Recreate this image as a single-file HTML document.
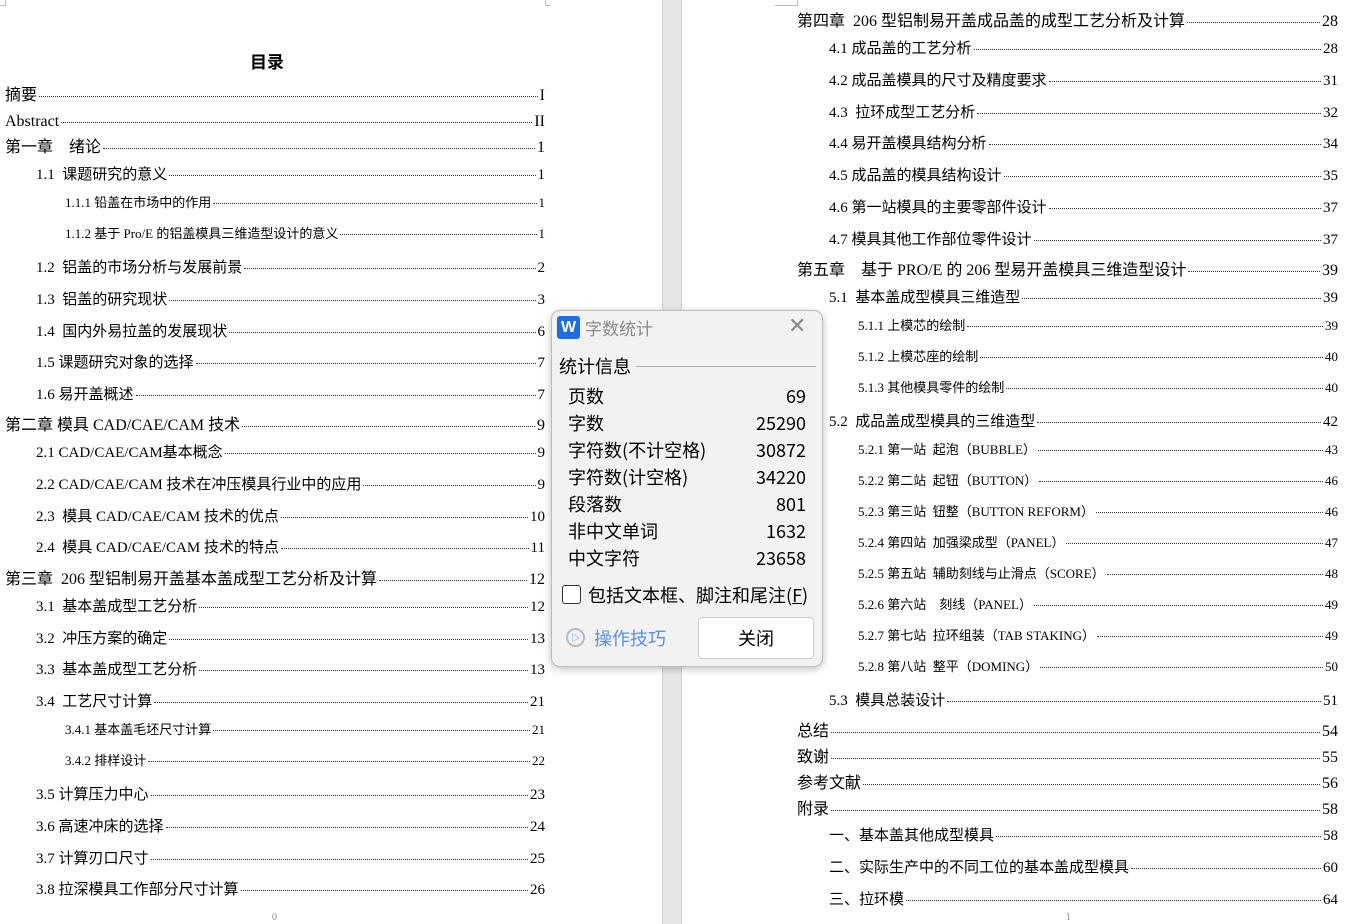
<!DOCTYPE html>
<html><head><meta charset="utf-8"><style>
*{margin:0;padding:0;box-sizing:border-box}
body{width:1345px;height:924px;position:relative;overflow:hidden;background:#fff;font-family:"Liberation Serif","Noto Sans CJK SC",serif;color:#000}
.gap{position:absolute;left:662px;top:0;width:20px;height:924px;background:#e6e6e6;border-left:1px solid #d0d0d0;border-right:1px solid #d0d0d0}
.l{position:absolute;display:flex;align-items:baseline;white-space:nowrap;height:20px;line-height:20px;font-size:15px;margin-top:2px}
.l .d{flex:1;border-bottom:1px dotted #333;margin:0 2px;transform:translateY(-3px)}
.s3{font-size:13px}
.t1{font-size:16px}
.dlg{position:absolute;left:551px;top:310px;width:272px;height:357px;background:#f2f2f2;border:1px solid #bdbdbd;border-radius:9px;box-shadow:0 2px 8px rgba(0,0,0,.25);font-family:"Noto Sans CJK SC",sans-serif}
.dlg .r{position:absolute;left:16px;right:16px;font-size:18px;display:flex;justify-content:space-between;line-height:24px}
</style></head><body>
<div class="gap"></div>
<div style="position:absolute;left:0;top:0;width:6px;height:6px;border-right:1px solid #bbb;border-bottom:1px solid #bbb"></div>
<div style="position:absolute;left:545px;top:0;width:6px;height:6px;border-left:1px solid #bbb;border-bottom:1px solid #bbb"></div>
<div style="position:absolute;left:775px;top:0;width:23px;height:6px;border-right:1px solid #bbb;border-bottom:1px solid #bbb"></div>
<div style="position:absolute;left:250px;top:48px;font-size:17px;font-weight:bold;font-family:'Noto Sans CJK SC',sans-serif">目录</div>
<div style="position:absolute;left:272px;top:912px;font-size:10px;color:#888">0</div>
<div style="position:absolute;left:1066px;top:912px;font-size:10px;color:#888">1</div>

<div class="l t1" style="left:5px;top:84px;width:540px">摘要<span class="d"></span>I</div>
<div class="l t1" style="left:5px;top:110px;width:540px">Abstract<span class="d"></span>II</div>
<div class="l t1" style="left:5px;top:136px;width:540px">第一章　绪论<span class="d"></span>1</div>
<div class="l" style="left:36px;top:163px;width:509px">1.1&nbsp; 课题研究的意义<span class="d"></span>1</div>
<div class="l s3" style="left:65px;top:191px;width:480px">1.1.1 铅盖在市场中的作用<span class="d"></span>1</div>
<div class="l s3" style="left:65px;top:222px;width:480px">1.1.2 基于 Pro/E 的铝盖模具三维造型设计的意义<span class="d"></span>1</div>
<div class="l" style="left:36px;top:256px;width:509px">1.2&nbsp; 铝盖的市场分析与发展前景<span class="d"></span>2</div>
<div class="l" style="left:36px;top:288px;width:509px">1.3&nbsp; 铝盖的研究现状<span class="d"></span>3</div>
<div class="l" style="left:36px;top:320px;width:509px">1.4&nbsp; 国内外易拉盖的发展现状<span class="d"></span>6</div>
<div class="l" style="left:36px;top:351px;width:509px">1.5 课题研究对象的选择<span class="d"></span>7</div>
<div class="l" style="left:36px;top:383px;width:509px">1.6 易开盖概述<span class="d"></span>7</div>
<div class="l t1" style="left:5px;top:414px;width:540px">第二章 模具 CAD/CAE/CAM 技术<span class="d"></span>9</div>
<div class="l" style="left:36px;top:441px;width:509px">2.1 CAD/CAE/CAM基本概念<span class="d"></span>9</div>
<div class="l" style="left:36px;top:473px;width:509px">2.2 CAD/CAE/CAM 技术在冲压模具行业中的应用<span class="d"></span>9</div>
<div class="l" style="left:36px;top:505px;width:509px">2.3&nbsp; 模具 CAD/CAE/CAM 技术的优点<span class="d"></span>10</div>
<div class="l" style="left:36px;top:536px;width:509px">2.4&nbsp; 模具 CAD/CAE/CAM 技术的特点<span class="d"></span>11</div>
<div class="l t1" style="left:5px;top:568px;width:540px">第三章&nbsp; 206 型铝制易开盖基本盖成型工艺分析及计算<span class="d"></span>12</div>
<div class="l" style="left:36px;top:595px;width:509px">3.1&nbsp; 基本盖成型工艺分析<span class="d"></span>12</div>
<div class="l" style="left:36px;top:627px;width:509px">3.2&nbsp; 冲压方案的确定<span class="d"></span>13</div>
<div class="l" style="left:36px;top:658px;width:509px">3.3&nbsp; 基本盖成型工艺分析<span class="d"></span>13</div>
<div class="l" style="left:36px;top:690px;width:509px">3.4&nbsp; 工艺尺寸计算<span class="d"></span>21</div>
<div class="l s3" style="left:65px;top:718px;width:480px">3.4.1 基本盖毛坯尺寸计算<span class="d"></span>21</div>
<div class="l s3" style="left:65px;top:749px;width:480px">3.4.2 排样设计<span class="d"></span>22</div>
<div class="l" style="left:36px;top:783px;width:509px">3.5 计算压力中心<span class="d"></span>23</div>
<div class="l" style="left:36px;top:815px;width:509px">3.6 高速冲床的选择<span class="d"></span>24</div>
<div class="l" style="left:36px;top:847px;width:509px">3.7 计算刃口尺寸<span class="d"></span>25</div>
<div class="l" style="left:36px;top:878px;width:509px">3.8 拉深模具工作部分尺寸计算<span class="d"></span>26</div>

<div class="l t1" style="left:797px;top:10px;width:541px">第四章&nbsp; 206 型铝制易开盖成品盖的成型工艺分析及计算<span class="d"></span>28</div>
<div class="l" style="left:829px;top:37px;width:509px">4.1 成品盖的工艺分析<span class="d"></span>28</div>
<div class="l" style="left:829px;top:69px;width:509px">4.2 成品盖模具的尺寸及精度要求<span class="d"></span>31</div>
<div class="l" style="left:829px;top:101px;width:509px">4.3&nbsp; 拉环成型工艺分析<span class="d"></span>32</div>
<div class="l" style="left:829px;top:132px;width:509px">4.4 易开盖模具结构分析<span class="d"></span>34</div>
<div class="l" style="left:829px;top:164px;width:509px">4.5 成品盖的模具结构设计<span class="d"></span>35</div>
<div class="l" style="left:829px;top:196px;width:509px">4.6 第一站模具的主要零部件设计<span class="d"></span>37</div>
<div class="l" style="left:829px;top:228px;width:509px">4.7 模具其他工作部位零件设计<span class="d"></span>37</div>
<div class="l t1" style="left:797px;top:259px;width:541px">第五章&nbsp;&nbsp;&nbsp; 基于 PRO/E 的 206 型易开盖模具三维造型设计<span class="d"></span>39</div>
<div class="l" style="left:829px;top:286px;width:509px">5.1&nbsp; 基本盖成型模具三维造型<span class="d"></span>39</div>
<div class="l s3" style="left:858px;top:314px;width:480px">5.1.1 上模芯的绘制<span class="d"></span>39</div>
<div class="l s3" style="left:858px;top:345px;width:480px">5.1.2 上模芯座的绘制<span class="d"></span>40</div>
<div class="l s3" style="left:858px;top:376px;width:480px">5.1.3 其他模具零件的绘制<span class="d"></span>40</div>
<div class="l" style="left:829px;top:410px;width:509px">5.2&nbsp; 成品盖成型模具的三维造型<span class="d"></span>42</div>
<div class="l s3" style="left:858px;top:438px;width:480px">5.2.1 第一站&nbsp; 起泡（BUBBLE）<span class="d"></span>43</div>
<div class="l s3" style="left:858px;top:469px;width:480px">5.2.2 第二站&nbsp; 起钮（BUTTON）<span class="d"></span>46</div>
<div class="l s3" style="left:858px;top:500px;width:480px">5.2.3 第三站&nbsp; 钮整（BUTTON REFORM）<span class="d"></span>46</div>
<div class="l s3" style="left:858px;top:531px;width:480px">5.2.4 第四站&nbsp; 加强梁成型（PANEL）<span class="d"></span>47</div>
<div class="l s3" style="left:858px;top:562px;width:480px">5.2.5 第五站&nbsp; 辅助刻线与止滑点（SCORE）<span class="d"></span>48</div>
<div class="l s3" style="left:858px;top:593px;width:480px">5.2.6 第六站&nbsp;&nbsp;&nbsp; 刻线（PANEL）<span class="d"></span>49</div>
<div class="l s3" style="left:858px;top:624px;width:480px">5.2.7 第七站&nbsp; 拉环组装（TAB STAKING）<span class="d"></span>49</div>
<div class="l s3" style="left:858px;top:655px;width:480px">5.2.8 第八站&nbsp; 整平（DOMING）<span class="d"></span>50</div>
<div class="l" style="left:829px;top:689px;width:509px">5.3&nbsp; 模具总装设计<span class="d"></span>51</div>
<div class="l t1" style="left:797px;top:720px;width:541px">总结<span class="d"></span>54</div>
<div class="l t1" style="left:797px;top:746px;width:541px">致谢<span class="d"></span>55</div>
<div class="l t1" style="left:797px;top:772px;width:541px">参考文献<span class="d"></span>56</div>
<div class="l t1" style="left:797px;top:798px;width:541px">附录<span class="d"></span>58</div>
<div class="l" style="left:829px;top:824px;width:509px">一、基本盖其他成型模具<span class="d"></span>58</div>
<div class="l" style="left:829px;top:856px;width:509px">二、实际生产中的不同工位的基本盖成型模具<span class="d"></span>60</div>
<div class="l" style="left:829px;top:888px;width:509px">三、拉环模<span class="d"></span>64</div>

<div class="dlg">
 <div style="position:absolute;left:5px;top:5px;width:23px;height:23px;background:#1a6fe8;border-radius:3px;color:#fff;font:bold 16px 'Liberation Sans',sans-serif;text-align:center;line-height:23px">W</div>
 <div style="position:absolute;left:33px;top:5px;font-size:17px;color:#8a8a8a;line-height:24px">字数统计</div>
 <div style="position:absolute;left:236px;top:4px;font:300 22px 'DejaVu Sans',sans-serif;color:#888;line-height:24px">✕</div>
 <div style="position:absolute;left:7px;top:43px;font-size:18px;line-height:24px">统计信息</div>
 <div style="position:absolute;left:84px;top:55px;width:180px;border-top:1px solid #aaa"></div>
 <div class="r" style="top:73px"><span>页数</span><span>69</span></div>
 <div class="r" style="top:100px"><span>字数</span><span>25290</span></div>
 <div class="r" style="top:127px"><span>字符数(不计空格)</span><span>30872</span></div>
 <div class="r" style="top:154px"><span>字符数(计空格)</span><span>34220</span></div>
 <div class="r" style="top:181px"><span>段落数</span><span>801</span></div>
 <div class="r" style="top:208px"><span>非中文单词</span><span>1632</span></div>
 <div class="r" style="top:235px"><span>中文字符</span><span>23658</span></div>
 <div style="position:absolute;left:10px;top:274px;width:19px;height:19px;border:1px solid #333;border-radius:3px;background:#fff"></div>
 <div style="position:absolute;left:36px;top:272px;font-size:18px;line-height:24px">包括文本框、脚注和尾注(<u>F</u>)</div>
 <div style="position:absolute;left:14px;top:317px;width:19px;height:19px;border:2px solid #bbb;border-radius:50%;color:#5b8ee6;font-size:9px;text-align:center;line-height:15px">▷</div>
 <div style="position:absolute;left:42px;top:315px;font-size:18px;color:#5b8ee6;line-height:24px">操作技巧</div>
 <div style="position:absolute;left:146px;top:306px;width:116px;height:42px;background:#fff;border:1px solid #ccc;border-radius:4px;text-align:center;line-height:40px;font-size:18px">关闭</div>
</div>
</body></html>
